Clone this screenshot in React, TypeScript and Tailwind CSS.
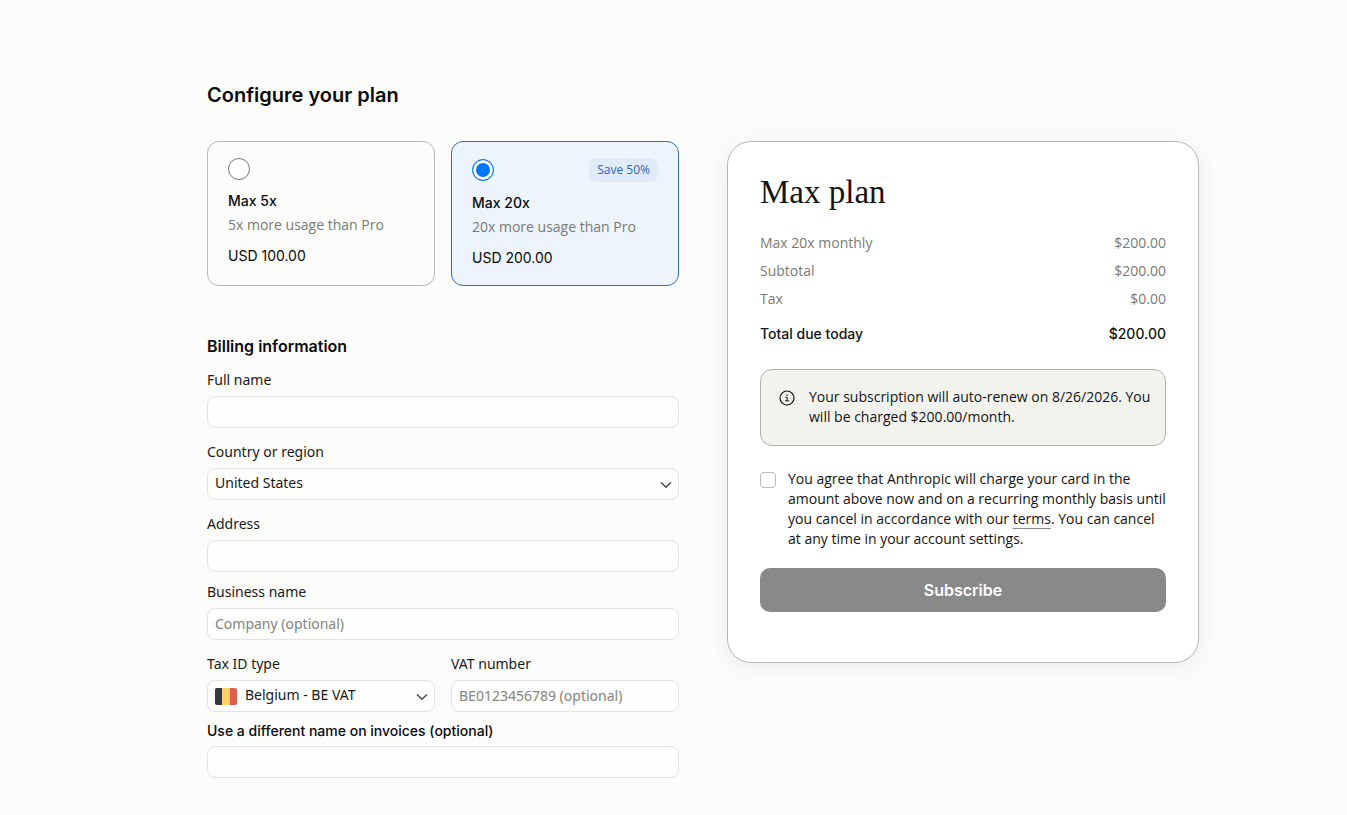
import { useState } from 'react'
import type { ReactNode } from 'react'

interface Plan {
  id: string
  name: string
  description: string
  price: string
  badge?: string
}

const PLANS: Plan[] = [
  { id: 'max-5x', name: 'Max 5x', description: '5x more usage than Pro', price: 'USD 100.00' },
  {
    id: 'max-20x',
    name: 'Max 20x',
    description: '20x more usage than Pro',
    price: 'USD 200.00',
    badge: 'Save 50%',
  },
]

const LINES = [
  { label: 'Max 20x monthly', amount: '$200.00' },
  { label: 'Subtotal', amount: '$200.00' },
  { label: 'Tax', amount: '$0.00' },
]

const FIELD =
  "block h-8 w-full rounded-lg border border-[#e5e4e2] bg-[#fefefd] px-[7px] pb-0.5 font-['Noto_Sans',sans-serif] text-[14px] leading-5 text-[#1a1a19] placeholder:text-[#85847f] focus:border-[#2c6fc9] focus:outline-none"

function Chevron() {
  return (
    <svg
      className="pointer-events-none absolute top-[11px] right-[7px]"
      width="12"
      height="12"
      viewBox="0 0 12 12"
      fill="none"
      aria-hidden="true"
    >
      <path d="M1.4 3.7L6 8.3L10.6 3.7" stroke="#4a4a48" strokeWidth="1.4" strokeLinecap="round" strokeLinejoin="round" />
    </svg>
  )
}

function BelgianFlag() {
  return (
    <svg
      className="pointer-events-none absolute top-2 left-2"
      width="22"
      height="17"
      viewBox="0 0 22 17"
      aria-hidden="true"
    >
      <clipPath id="flag">
        <rect width="22" height="17" rx="2" />
      </clipPath>
      <g clipPath="url(#flag)">
        <rect width="7" height="17" fill="#353a3d" />
        <rect x="7" width="8" height="17" fill="#fdd367" />
        <rect x="15" width="7" height="17" fill="#e55a50" />
      </g>
    </svg>
  )
}

interface FieldProps {
  id: string
  label: string
  children: ReactNode
}

function Field({ id, label, children }: FieldProps) {
  return (
    <div>
      <label
        htmlFor={id}
        className="mb-1.5 block font-['Noto_Sans',sans-serif] text-[14px] leading-5 text-[#1a1a19]"
      >
        {label}
      </label>
      {children}
    </div>
  )
}

interface PlanCardProps {
  plan: Plan
  selected: boolean
  onSelect: (id: string) => void
}

function PlanCard({ plan, selected, onSelect }: PlanCardProps) {
  return (
    <label
      className={`block cursor-pointer rounded-xl border px-5 pt-4 pb-[15px] text-[14px] leading-6 ${
        selected ? 'border-[#2c6fc0] bg-[#edf4fb]' : 'border-[#b7b7b5]'
      }`}
    >
      <span className="mb-[9px] flex items-center justify-between">
        <input
          type="radio"
          name="plan"
          checked={selected}
          onChange={() => onSelect(plan.id)}
          className="size-[22px] appearance-none rounded-full border border-[#767676] bg-white checked:border-[#0075ff] checked:bg-[#0075ff] checked:shadow-[inset_0_0_0_3px_white]"
        />
        {plan.badge && (
          <span className="rounded-lg bg-[#e0ebf9] px-2 text-[12px] leading-6 text-[#2c66bd]">{plan.badge}</span>
        )}
      </span>
      <span className="block font-[Inter,sans-serif] font-medium text-[#0b0b0b]">{plan.name}</span>
      <span className="block text-[#7b7a75]">{plan.description}</span>
      <span className="mt-[7px] block font-[Inter,sans-serif] text-[#0b0b0b]">{plan.price}</span>
    </label>
  )
}

function OrderSummary() {
  const [agreed, setAgreed] = useState(false)

  return (
    <aside className="rounded-3xl border border-[#b7b7b5] bg-white px-8 pt-8 pb-[50px] text-[14px] text-[#141413] shadow-[0_4px_24px_rgba(0,0,0,0.07)]">
      <h2 className="mb-[19px] font-['Liberation_Serif',serif] text-[33px] leading-9 font-medium">Max plan</h2>

      <dl>
        {LINES.map(line => (
          <div key={line.label} className="flex justify-between leading-7 text-[#7b7a75]">
            <dt>{line.label}</dt>
            <dd>{line.amount}</dd>
          </div>
        ))}
        <div className="mt-[9px] flex justify-between font-[Inter,sans-serif] leading-6 font-medium">
          <dt>Total due today</dt>
          <dd>$200.00</dd>
        </div>
      </dl>

      {/* Renewal notice */}
      <div className="mt-[23px] flex gap-3.5 rounded-xl border border-[#b3b3ae] bg-[#f3f3ee] pt-[17px] pr-3 pb-[18px] pl-[18px] leading-5">
        <svg className="mt-[3px] shrink-0" width="16" height="16" viewBox="0 0 16 16" fill="none" aria-hidden="true">
          <circle cx="8" cy="8" r="7" stroke="#141413" strokeWidth="1.2" />
          <path d="M6.4 7.4H8.2V10.8M6 10.8H10" stroke="#141413" />
          <circle cx="8" cy="5.2" r="0.8" fill="#141413" />
        </svg>
        <p>Your subscription will auto-renew on 8/26/2026. You will be charged $200.00/month.</p>
      </div>

      <div className="mt-[23px] flex gap-3 leading-5">
        <input
          id="agree"
          type="checkbox"
          checked={agreed}
          onChange={e => setAgreed(e.target.checked)}
          className="mt-[3px] size-4 shrink-0 appearance-none rounded border border-[#b7b7b5] bg-white checked:bg-[#2c6fc0]"
        />
        <label htmlFor="agree">
          You agree that Anthropic will charge your card in the amount above now and on a recurring monthly basis until
          you cancel in accordance with our{' '}
          <a href="#terms" className="underline decoration-[#8a8a86] decoration-1 underline-offset-4">
            terms
          </a>
          . You can cancel at any time in your account settings.
        </label>
      </div>

      <button
        type="button"
        disabled={!agreed}
        className="mt-[19px] h-11 w-full rounded-[10px] bg-[#141413] font-[Inter,sans-serif] text-[16px] font-semibold text-white disabled:bg-[#898989]"
      >
        Subscribe
      </button>
    </aside>
  )
}

export default function App() {
  const [plan, setPlan] = useState('max-20x')

  return (
    <div className="min-h-screen bg-[#fcfcfb] font-['Open_Sans',sans-serif] text-[#0b0b0b]">
      <main className="mx-auto max-w-[1051px] pt-[81px] pb-9 pl-[59px]">
        <h1 className="mb-8 font-[Inter,sans-serif] text-[20px] leading-7 font-semibold">Configure your plan</h1>

        <div className="grid grid-cols-2 items-start gap-12">
          <form>
            <div className="grid grid-cols-2 gap-4">
              {PLANS.map(p => (
                <PlanCard key={p.id} plan={p} selected={p.id === plan} onSelect={setPlan} />
              ))}
            </div>

            <h2 className="mt-12 mb-3 font-[Inter,sans-serif] text-[16px] leading-6 font-semibold">
              Billing information
            </h2>

            <div className="flex flex-col gap-3.5">
              <Field id="name" label="Full name">
                <input id="name" type="text" className={FIELD} />
              </Field>
              <Field id="country" label="Country or region">
                <div className="relative">
                  <select id="country" className={`${FIELD} appearance-none`}>
                    <option>United States</option>
                  </select>
                  <Chevron />
                </div>
              </Field>
              <Field id="address" label="Address">
                <input id="address" type="text" className={FIELD} />
              </Field>
            </div>

            <div className="mt-2.5 grid grid-cols-2 gap-x-4 gap-y-3.5">
              <div className="col-span-2">
                <Field id="business" label="Business name">
                  <input id="business" type="text" placeholder="Company (optional)" className={FIELD} />
                </Field>
              </div>
              <Field id="tax-type" label="Tax ID type">
                <div className="relative">
                  <select id="tax-type" className={`${FIELD} appearance-none pl-[37px]`}>
                    <option>Belgium - BE VAT</option>
                  </select>
                  <BelgianFlag />
                  <Chevron />
                </div>
              </Field>
              <Field id="vat" label="VAT number">
                <input id="vat" type="text" placeholder="BE0123456789 (optional)" className={FIELD} />
              </Field>
            </div>

            <label
              htmlFor="invoice-name"
              className="mt-2 mb-1 block font-[Inter,sans-serif] text-[14px] leading-[22px] font-medium"
            >
              Use a different name on invoices (optional)
            </label>
            <input id="invoice-name" type="text" className={FIELD} />
          </form>

          <OrderSummary />
        </div>
      </main>
    </div>
  )
}
